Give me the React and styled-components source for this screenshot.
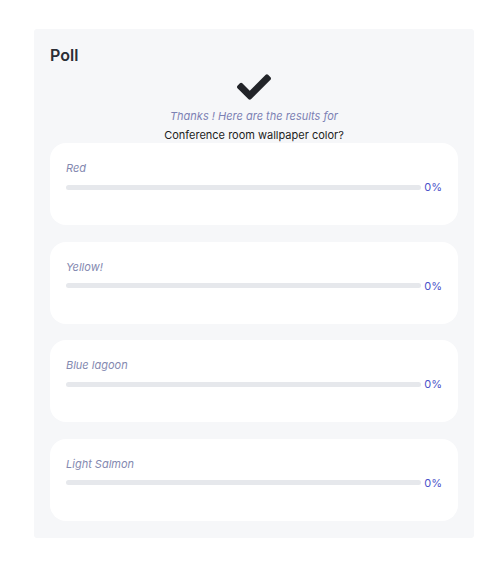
import React from "react";
import styled, { createGlobalStyle } from "styled-components";
import { FaCheck } from "react-icons/fa";

const Global = createGlobalStyle`
  html, body { margin: 0; padding: 0; background: #ffffff; }
  body { font-family: Inter, "Noto Sans", sans-serif; }
`;

const Panel = styled.section`
  box-sizing: border-box;
  width: 440px;
  margin: 29px 0 0 34px;
  padding: 16px 16px 17px;
  background: #f6f7f9;
  border-radius: 3px;
`;

const Title = styled.h2`
  margin: 0;
  font-size: 16px;
  line-height: 20px;
  font-weight: 600;
  color: #2b2e35;
`;

const Header = styled.div`
  display: flex;
  flex-direction: column;
  align-items: center;
`;

const CheckIcon = styled(FaCheck)`
  display: block;
  margin-top: 5px;
  color: #222429;
`;

const Thanks = styled.p`
  margin: 4px 0 0;
  font-size: 11px;
  line-height: 16px;
  font-style: italic;
  color: #7c81b4;
`;

const Question = styled.p`
  margin: 3px 0 0;
  font-size: 11px;
  line-height: 16px;
  color: #1c1d22;
`;

const Options = styled.div`
  display: flex;
  flex-direction: column;
  gap: 16.5px;
`;

const Card = styled.div`
  box-sizing: border-box;
  height: 82px;
  padding: 18px 16px 0;
  background: #ffffff;
  border-radius: 16px;
`;

const Label = styled.div`
  font-size: 11px;
  line-height: 14px;
  font-style: italic;
  color: #8489b0;
`;

const BarRow = styled.div`
  display: flex;
  align-items: center;
  gap: 3px;
  margin-top: 5px;
`;

const Track = styled.div`
  flex: 1;
  height: 5px;
  border-radius: 3px;
  background: #e6e8ec;
  overflow: hidden;
`;

const Fill = styled.div`
  height: 100%;
  background: #4f55c8;
`;

const Percent = styled.span`
  font-size: 11px;
  line-height: 14px;
  color: #4c52c9;
`;

const options = ["Red", "Yellow!", "Blue lagoon", "Light Salmon"].map((label) => ({
  label,
  pct: 0,
}));

export default function App() {
  return (
    <>
      <Global />
      <Panel>
        <Title>Poll</Title>
        <Header>
          <CheckIcon size={34} />
          <Thanks>Thanks ! Here are the results for</Thanks>
          <Question>Conference room wallpaper color?</Question>
        </Header>
        <Options>
          {options.map((o) => (
            <Card key={o.label}>
              <Label>{o.label}</Label>
              <BarRow>
                <Track>
                  <Fill style={{ width: `${o.pct}%` }} />
                </Track>
                <Percent>{o.pct}%</Percent>
              </BarRow>
            </Card>
          ))}
        </Options>
      </Panel>
    </>
  );
}
